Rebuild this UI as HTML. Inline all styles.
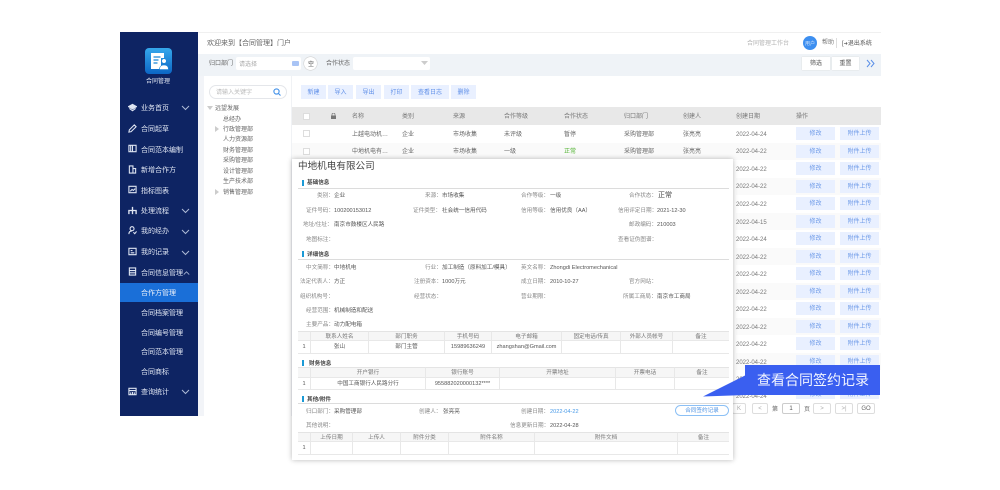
<!DOCTYPE html>
<html lang="zh">
<head>
<meta charset="utf-8">
<title>合同管理</title>
<style>
html,body{margin:0;padding:0;background:#fff}
#p{position:relative;width:1000px;height:490px;overflow:hidden;background:#fff;font-family:"Liberation Sans","Noto Sans CJK SC",sans-serif;color:#666;filter:blur(.3px)}
#p div,#p span,#p svg{position:absolute}
.t{white-space:nowrap;line-height:10px;height:8px;font-size:6px}
.m{white-space:nowrap;line-height:10px;height:8px;font-size:5.6px;color:#555}
.l{color:#888}
.s{white-space:nowrap;line-height:13px;height:10px;font-size:7px;color:#dfe5f2;left:141px}
.i{left:128px;width:9px;height:9px;fill:none;stroke:#dfe5f2;stroke-width:1.2;margin-top:1px}
.v{left:181px;width:9px;height:6px;fill:none;stroke:#aebad6;stroke-width:1;margin-top:1px}
.b{height:14px;line-height:16px;top:85px;background:#e9f0ff;color:#5f8fe8;font-size:6px;text-align:center}
.h{top:112px;color:#777}
.d{left:736px;color:#777}
.e{left:796px;width:39px;height:13px;line-height:15px;background:#e9f0ff;color:#6f9be8;font-size:6px;text-align:center}
.f{left:840px;width:39px;height:13px;line-height:15px;background:#e9f0ff;color:#6f9be8;font-size:6px;text-align:center}
.c{box-sizing:border-box;text-align:center;font-size:5.6px;white-space:nowrap;color:#555;border-right:1px solid #e8e8e8;border-bottom:1px solid #e8e8e8}
.hc{height:10px;line-height:10px;background:#f6f6f6;color:#777;border-top:1px solid #e4e4e4}
.bar{left:302px;width:2px;height:6px;background:#1b9ad6}
.sec{left:307px;font-weight:bold;color:#444;font-size:5.6px;white-space:nowrap;line-height:10px;height:8px}
.ln{left:298px;width:431px;height:1px;background:#dcdcdc}
.pg{top:403px;height:11px;box-sizing:border-box;border:1px solid #ddd;border-radius:2px;background:#fff;text-align:center;line-height:10px;font-size:6px;color:#aaa}
</style>
</head>
<body>
<div id="p">
<!-- main frame -->
<div style="left:198px;top:32px;width:683px;height:384px;background:#fff"></div>
<div style="left:198px;top:32px;width:683px;height:1px;background:#f0f0f0"></div>
<div style="left:198px;top:54px;width:683px;height:22px;background:#eff3f7"></div>
<div style="left:198px;top:76px;width:6px;height:340px;background:#f2f4f8"></div>
<div style="left:291px;top:76px;width:1px;height:340px;background:#f0f2f5"></div>

<!-- sidebar -->
<div style="left:120px;top:32px;width:78px;height:384px;background:#0e2463"></div>
<div style="left:145px;top:48px;width:27px;height:26px;border-radius:4px;background:linear-gradient(#35a8ec,#0c66c4)"></div>
<svg style="left:145px;top:48px" width="27" height="26" viewBox="0 0 27 26"><path d="M6 5h13v5h-3v11H6z" fill="#fff"/><path d="M8.500 9h7M8.500 12h5M8.500 15h4" stroke="#1b86d8" stroke-width="1.300"/><circle cx="19" cy="13" r="2.300" fill="#fff" stroke="#1b86d8" stroke-width=".6"/><path d="M14.500 21.500c0-3 2-4.500 4.500-4.500s4.500 1.500 4.500 4.500z" fill="#fff" stroke="#1b86d8" stroke-width=".6"/></svg>
<div class="t" style="left:146px;top:77px;color:#e6ebf5">合同管理</div>

<svg class="i" style="top:102px" viewBox="0 0 10 10"><path d="M.5 4L5 1.500 9.500 4 5 6.500z" fill="#dfe5f2"/><path d="M1.500 6L5 8.500 8.500 6"/></svg>
<div class="s" style="top:102px">业务首页</div>
<svg class="v" style="top:104px" viewBox="0 0 9 6"><path d="M1 1l3.500 3.500L8 1"/></svg>
<svg class="i" style="top:123px" viewBox="0 0 10 10"><path d="M1 9l.5-2.500L7 1l2 2-5.500 5.500z"/></svg>
<div class="s" style="top:123px">合同起草</div>
<svg class="i" style="top:143px" viewBox="0 0 10 10"><path d="M1 1.500h8v7H1zM5 1.500v7M3 1.500v7"/></svg>
<div class="s" style="top:143.500px">合同范本编制</div>
<svg class="i" style="top:164px" viewBox="0 0 10 10"><path d="M1.500 1h4v8h-4zM5.500 4h3v5h-3z"/></svg>
<div class="s" style="top:164px">新增合作方</div>
<svg class="i" style="top:184px" viewBox="0 0 10 10"><path d="M1 1.500h8v7H1zM2.500 7l2-2 1.500 1 2-2"/></svg>
<div class="s" style="top:184.500px">指标图表</div>
<svg class="i" style="top:205px" viewBox="0 0 10 10"><path d="M5 1v8M1 9V5h8v4" stroke-width="1.500"/></svg>
<div class="s" style="top:205px">处理流程</div>
<svg class="v" style="top:207px" viewBox="0 0 9 6"><path d="M1 1l3.500 3.500L8 1"/></svg>
<svg class="i" style="top:225px" viewBox="0 0 10 10"><circle cx="4.500" cy="3" r="2.200"/><path d="M1 9c0-2.500 1.500-3.500 3.500-3.500M6 7l1.500 1.500L9.500 6"/></svg>
<div class="s" style="top:225px">我的经办</div>
<svg class="v" style="top:228px" viewBox="0 0 9 6"><path d="M1 1l3.500 3.500L8 1"/></svg>
<svg class="i" style="top:246px" viewBox="0 0 10 10"><path d="M1 1.500h8v7H1zM3 6.500h4M3 4h2"/></svg>
<div class="s" style="top:246px">我的记录</div>
<svg class="v" style="top:249px" viewBox="0 0 9 6"><path d="M1 1l3.500 3.500L8 1"/></svg>
<svg class="i" style="top:266px" viewBox="0 0 10 10"><path d="M1.500 1h7v8h-7zM1.500 4h7M1.500 6.500h7"/></svg>
<div class="s" style="top:266.500px">合同信息管理</div>
<svg class="v" style="top:269px;left:183px;width:7px" viewBox="0 0 9 6"><path d="M1 5l3.500-3.500L8 5"/></svg>
<div style="left:120px;top:283px;width:78px;height:19px;background:#1a6fd8"></div>
<div class="s" style="top:287px;color:#eef3fb">合作方管理</div>
<div class="s" style="top:307px">合同档案管理</div>
<div class="s" style="top:326.500px">合同编号管理</div>
<div class="s" style="top:346px">合同范本管理</div>
<div class="s" style="top:366px">合同商标</div>
<svg class="i" style="top:386px" viewBox="0 0 10 10"><path d="M1 1.500h8v7H1zM1 4h8M3 8V6M5 8V5.500M7 8V6"/></svg>
<div class="s" style="top:386px">查询统计</div>
<svg class="v" style="top:388px" viewBox="0 0 9 6"><path d="M1 1l3.500 3.500L8 1"/></svg>

<!-- top bar -->
<div class="t" style="left:207px;top:39px;font-size:7px;color:#666">欢迎来到【合同管理】门户</div>
<div class="t" style="left:747px;top:39px;color:#b4b4b4">合同管理工作台</div>
<div style="left:803px;top:36px;width:14px;height:14px;border-radius:50%;background:#3d8ff0"></div>
<div class="t" style="left:805px;top:39px;font-size:5px;color:#cfe2fb">用户</div>
<div class="t" style="left:822px;top:38px;color:#777">帮助</div>
<div style="left:836px;top:38px;width:1px;height:10px;background:#ddd"></div>
<div class="t" style="left:842px;top:39px;color:#555">[<span style="position:static;font-size:5px">➜</span>退出系统</div>

<!-- filter bar -->
<div class="t" style="left:209px;top:59px;color:#666">归口部门</div>
<div style="left:236px;top:57px;width:65px;height:13px;background:#fff;border-radius:2px"></div>
<div class="t" style="left:239px;top:60px;color:#aaa">请选择</div>
<div style="left:292px;top:61px;width:7px;height:5px;background:#a9c4f5;border-radius:1px"></div>
<div style="left:304px;top:57px;width:13px;height:13px;border-radius:50%;background:#fff;box-shadow:0 0 0 .5px #ccc"></div>
<div class="t" style="left:308px;top:60px;color:#444">空</div>
<div class="t" style="left:326px;top:59px;color:#666">合作状态</div>
<div style="left:353px;top:57px;width:77px;height:13px;background:#fff;border-radius:2px"></div>
<svg style="left:421px;top:61px" width="7" height="5" viewBox="0 0 7 5"><path d="M0 0h7L3.500 4z" fill="#ccc"/></svg>
<div style="left:802px;top:57px;width:28px;height:13px;background:#fff;box-shadow:0 0 1px #ccc;line-height:15px;font-size:6px;color:#555;text-align:center">筛选</div>
<div style="left:832px;top:57px;width:27px;height:13px;background:#fff;box-shadow:0 0 1px #ccc;line-height:15px;font-size:6px;color:#555;text-align:center">重置</div>
<svg style="left:866px;top:59px;fill:none;stroke:#5a8fe8;stroke-width:1" width="9" height="9" viewBox="0 0 9 9"><path d="M1 1l3 3.500L1 8M5 1l3 3.500L5 8"/></svg>

<!-- tree -->
<div style="left:209px;top:85px;width:76px;height:12px;border:1px solid #e4e6ea;border-radius:7px"></div>
<div class="t" style="left:216px;top:88px;color:#bbb">请输入关键字</div>
<svg style="left:273px;top:88px;fill:none;stroke:#3f8fe8;stroke-width:1.100" width="8" height="8" viewBox="0 0 8 8"><circle cx="3.500" cy="3.500" r="2.600"/><path d="M5.500 5.500L7.500 7.500"/></svg>
<svg style="left:207px;top:106px" width="6" height="5" viewBox="0 0 6 5"><path d="M0 0h6L3 4z" fill="#ccc"/></svg>
<div class="t" style="left:215px;top:104px">远望发展</div>
<div class="t" style="left:223px;top:114.500px">总经办</div>
<svg style="left:215px;top:126px" width="4" height="6" viewBox="0 0 4 6"><path d="M0 0v6l4-3z" fill="#ccc"/></svg>
<div class="t" style="left:223px;top:125px">行政管理部</div>
<div class="t" style="left:223px;top:135px">人力资源部</div>
<div class="t" style="left:223px;top:146px">财务管理部</div>
<div class="t" style="left:223px;top:156px">采购管理部</div>
<div class="t" style="left:223px;top:166.500px">设计管理部</div>
<div class="t" style="left:223px;top:177px">生产技术部</div>
<svg style="left:215px;top:189px" width="4" height="6" viewBox="0 0 4 6"><path d="M0 0v6l4-3z" fill="#ccc"/></svg>
<div class="t" style="left:223px;top:187.500px">销售管理部</div>

<!-- toolbar -->
<div class="b" style="left:301px;width:25px">新建</div>
<div class="b" style="left:328px;width:25px">导入</div>
<div class="b" style="left:356px;width:25px">导出</div>
<div class="b" style="left:384px;width:25px">打印</div>
<div class="b" style="left:411px;width:38px">查看日志</div>
<div class="b" style="left:451px;width:25px">删除</div>

<!-- table -->
<div style="left:292px;top:107px;width:589px;height:18px;background:#e8e8e8"></div>
<div style="left:292px;top:143px;width:589px;height:17px;background:#fafafa"></div>
<div style="left:736px;top:178px;width:145px;height:17px;background:#fafafa"></div>
<div style="left:736px;top:213px;width:145px;height:17px;background:#fafafa"></div>
<div style="left:736px;top:248px;width:145px;height:17px;background:#fafafa"></div>
<div style="left:736px;top:283px;width:145px;height:17px;background:#fafafa"></div>
<div style="left:736px;top:318px;width:145px;height:17px;background:#fafafa"></div>
<div style="left:736px;top:353px;width:145px;height:17px;background:#fafafa"></div>
<div style="left:303px;top:113px;width:5px;height:5px;background:#fff;border:1px solid #ddd"></div>
<svg style="left:331px;top:113px" width="5" height="6" viewBox="0 0 5 6"><path d="M0 2.500h5V6H0z" fill="#777"/><path d="M1 2.500V1.500a1.500 1.500 0 013 0v1" fill="none" stroke="#777" stroke-width=".7"/></svg>
<div class="t h" style="left:352px">名称</div>
<div class="t h" style="left:402px">类别</div>
<div class="t h" style="left:453px">来源</div>
<div class="t h" style="left:504px">合作等级</div>
<div class="t h" style="left:564px">合作状态</div>
<div class="t h" style="left:624px">归口部门</div>
<div class="t h" style="left:683px">创建人</div>
<div class="t h" style="left:736px">创建日期</div>
<div class="t h" style="left:796px">操作</div>

<div style="left:303px;top:130px;width:5px;height:5px;background:#fff;border:1px solid #ddd"></div>
<div class="t" style="left:352px;top:130px">上越电动机…</div>
<div class="t" style="left:402px;top:130px">企业</div>
<div class="t" style="left:453px;top:130px">市场收集</div>
<div class="t" style="left:504px;top:130px">未评级</div>
<div class="t" style="left:564px;top:130px">暂停</div>
<div class="t" style="left:624px;top:130px">采购管理部</div>
<div class="t" style="left:683px;top:130px">张亮亮</div>

<div style="left:303px;top:148px;width:5px;height:5px;background:#fff;border:1px solid #ddd"></div>
<div class="t" style="left:352px;top:147px">中地机电有…</div>
<div class="t" style="left:402px;top:147px">企业</div>
<div class="t" style="left:453px;top:147px">市场收集</div>
<div class="t" style="left:504px;top:147px">一级</div>
<div class="t" style="left:564px;top:147px;color:#52b332">正常</div>
<div class="t" style="left:624px;top:147px">采购管理部</div>
<div class="t" style="left:683px;top:147px">张亮亮</div>

<div class="t d" style="top:130px">2022-04-24</div><div class="e" style="top:127px">修改</div><div class="f" style="top:127px">附件上传</div>
<div class="t d" style="top:147px">2022-04-22</div><div class="e" style="top:145px">修改</div><div class="f" style="top:145px">附件上传</div>
<div class="t d" style="top:165px">2022-04-22</div><div class="e" style="top:162px">修改</div><div class="f" style="top:162px">附件上传</div>
<div class="t d" style="top:182px">2022-04-22</div><div class="e" style="top:180px">修改</div><div class="f" style="top:180px">附件上传</div>
<div class="t d" style="top:200px">2022-04-22</div><div class="e" style="top:197px">修改</div><div class="f" style="top:197px">附件上传</div>
<div class="t d" style="top:218px">2022-04-15</div><div class="e" style="top:215px">修改</div><div class="f" style="top:215px">附件上传</div>
<div class="t d" style="top:235px">2022-04-24</div><div class="e" style="top:232px">修改</div><div class="f" style="top:232px">附件上传</div>
<div class="t d" style="top:253px">2022-04-22</div><div class="e" style="top:250px">修改</div><div class="f" style="top:250px">附件上传</div>
<div class="t d" style="top:270px">2022-04-22</div><div class="e" style="top:267px">修改</div><div class="f" style="top:267px">附件上传</div>
<div class="t d" style="top:288px">2022-04-22</div><div class="e" style="top:285px">修改</div><div class="f" style="top:285px">附件上传</div>
<div class="t d" style="top:305px">2022-04-22</div><div class="e" style="top:302px">修改</div><div class="f" style="top:302px">附件上传</div>
<div class="t d" style="top:323px">2022-04-22</div><div class="e" style="top:320px">修改</div><div class="f" style="top:320px">附件上传</div>
<div class="t d" style="top:340px">2022-04-22</div><div class="e" style="top:337px">修改</div><div class="f" style="top:337px">附件上传</div>
<div class="t d" style="top:358px">2022-04-22</div><div class="e" style="top:355px">修改</div><div class="f" style="top:355px">附件上传</div>
<div class="t d" style="top:375px">2022-04-22</div><div class="e" style="top:372px">修改</div><div class="f" style="top:372px">附件上传</div>
<div class="t d" style="top:392px">2022-04-24</div><div class="e" style="top:390px;height:9px;line-height:11px">修改</div><div class="f" style="top:390px;height:9px;line-height:11px">附件上传</div>

<!-- pagination -->
<div class="pg" style="left:732px;width:14px">K</div>
<div class="pg" style="left:752px;width:16px">&lt;</div>
<div class="t" style="left:772px;top:405px">第</div>
<div class="pg" style="left:782px;width:18px;color:#555;border-color:#ccc">1</div>
<div class="t" style="left:804px;top:405px">页</div>
<div class="pg" style="left:813px;width:18px">&gt;</div>
<div class="pg" style="left:835px;width:18px">&gt;|</div>
<div class="pg" style="left:857px;width:18px;color:#666">GO</div>

<!-- modal -->
<div style="left:292px;top:159px;width:441px;height:301px;background:#fff;box-shadow:0 0 5px rgba(0,0,0,.28)"></div>
<div class="t" style="left:298px;top:160px;height:12px;line-height:14px;font-size:9.600px;color:#444">中地机电有限公司</div>

<div class="bar" style="top:180px"></div><div class="sec" style="top:178px">基础信息</div><div class="ln" style="top:187.500px"></div>
<div class="m l" style="left:317px;top:191px">类别：</div><div class="m" style="left:334px;top:191px">企业</div>
<div class="m l" style="left:425px;top:191px">来源：</div><div class="m" style="left:442px;top:191px">市场收集</div>
<div class="m l" style="left:521px;top:191px">合作等级：</div><div class="m" style="left:550px;top:191px">一级</div>
<div class="m l" style="left:629px;top:191px">合作状态：</div><div class="m" style="left:658px;top:190.500px;font-size:7px;color:#444">正常</div>
<div class="m l" style="left:306px;top:205.500px">证件号码：</div><div class="m" style="left:334px;top:205.500px">100200153012</div>
<div class="m l" style="left:413px;top:205.500px">证件类型：</div><div class="m" style="left:442px;top:205.500px">社会统一信用代码</div>
<div class="m l" style="left:521px;top:205.500px">信用等级：</div><div class="m" style="left:550px;top:205.500px">信用优良（AA）</div>
<div class="m l" style="left:618px;top:205.500px">信用评定日期：</div><div class="m" style="left:657px;top:205.500px">2021-12-30</div>
<div class="m l" style="left:303px;top:220px">地址/住址：</div><div class="m" style="left:334px;top:220px">南京市鼓楼区人民路</div>
<div class="m l" style="left:629px;top:220px">邮政编码：</div><div class="m" style="left:657px;top:220px">210003</div>
<div class="m l" style="left:306px;top:234.500px">地图标注：</div>
<div class="m l" style="left:618px;top:234.500px">查看证伪图谱：</div>

<div class="bar" style="top:251px"></div><div class="sec" style="top:250px">详细信息</div><div class="ln" style="top:258.500px"></div>
<div class="m l" style="left:306px;top:263px">中文简称：</div><div class="m" style="left:334px;top:263px">中地机电</div>
<div class="m l" style="left:425px;top:263px">行业：</div><div class="m" style="left:442px;top:263px">加工制造（原料加工/模具）</div>
<div class="m l" style="left:521px;top:263px">英文名称：</div><div class="m" style="left:550px;top:263px">Zhongdi Electromechanical</div>
<div class="m l" style="left:300px;top:277px">法定代表人：</div><div class="m" style="left:334px;top:277px">方正</div>
<div class="m l" style="left:414px;top:277px">注册资本：</div><div class="m" style="left:442px;top:277px">1000万元</div>
<div class="m l" style="left:521px;top:277px">成立日期：</div><div class="m" style="left:550px;top:277px">2010-10-27</div>
<div class="m l" style="left:629px;top:277px">官方网站：</div>
<div class="m l" style="left:300px;top:291.500px">组织机构号：</div>
<div class="m l" style="left:414px;top:291.500px">经营状态：</div>
<div class="m l" style="left:521px;top:291.500px">营业期限：</div>
<div class="m l" style="left:623px;top:291.500px">所属工商局：</div><div class="m" style="left:657px;top:291.500px">南京市工商局</div>
<div class="m l" style="left:306px;top:305.500px">经营范围：</div><div class="m" style="left:334px;top:305.500px">机械制造和配送</div>
<div class="m l" style="left:306px;top:320px">主要产品：</div><div class="m" style="left:334px;top:320px">动力配电箱</div>

<div class="c hc" style="left:298px;top:331px;width:13px"></div>
<div class="c hc" style="left:311px;top:331px;width:58px">联系人姓名</div>
<div class="c hc" style="left:369px;top:331px;width:76px">部门职务</div>
<div class="c hc" style="left:445px;top:331px;width:47px">手机号码</div>
<div class="c hc" style="left:492px;top:331px;width:70px">电子邮箱</div>
<div class="c hc" style="left:562px;top:331px;width:59px">固定电话/传真</div>
<div class="c hc" style="left:621px;top:331px;width:52px">外部人员帐号</div>
<div class="c hc" style="left:673px;top:331px;width:56px;border-right:0">备注</div>
<div class="c" style="left:298px;top:341px;width:13px;height:13px;line-height:13px">1</div>
<div class="c" style="left:311px;top:341px;width:58px;height:13px;line-height:13px">张山</div>
<div class="c" style="left:369px;top:341px;width:76px;height:13px;line-height:13px">部门主管</div>
<div class="c" style="left:445px;top:341px;width:47px;height:13px;line-height:13px">15989636249</div>
<div class="c" style="left:492px;top:341px;width:70px;height:13px;line-height:13px">zhangshan@Gmail.com</div>
<div class="c" style="left:562px;top:341px;width:59px;height:13px"></div>
<div class="c" style="left:621px;top:341px;width:52px;height:13px"></div>
<div class="c" style="left:673px;top:341px;width:56px;height:13px;border-right:0"></div>

<div class="bar" style="top:360px"></div><div class="sec" style="left:309px;top:359px">财务信息</div>
<div class="c hc" style="left:298px;top:367px;width:13px;height:11px"></div>
<div class="c hc" style="left:311px;top:367px;width:115px;height:11px">开户银行</div>
<div class="c hc" style="left:426px;top:367px;width:74px;height:11px">银行账号</div>
<div class="c hc" style="left:500px;top:367px;width:116px;height:11px">开票地址</div>
<div class="c hc" style="left:616px;top:367px;width:59px;height:11px">开票电话</div>
<div class="c hc" style="left:675px;top:367px;width:54px;height:11px;border-right:0">备注</div>
<div class="c" style="left:298px;top:378px;width:13px;height:12px;line-height:12px">1</div>
<div class="c" style="left:311px;top:378px;width:115px;height:12px;line-height:12px">中国工商银行人民路分行</div>
<div class="c" style="left:426px;top:378px;width:74px;height:12px;line-height:12px">955882020000132****</div>
<div class="c" style="left:500px;top:378px;width:116px;height:12px"></div>
<div class="c" style="left:616px;top:378px;width:59px;height:12px"></div>
<div class="c" style="left:675px;top:378px;width:54px;height:12px;border-right:0"></div>

<div class="bar" style="top:396px"></div><div class="sec" style="top:395px">其他/附件</div><div class="ln" style="top:402.500px"></div>
<div class="m l" style="left:306px;top:406.500px">归口部门：</div><div class="m" style="left:334px;top:406.500px">采购管理部</div>
<div class="m l" style="left:419px;top:406.500px">创建人：</div><div class="m" style="left:443px;top:406.500px">张亮亮</div>
<div class="m l" style="left:521px;top:406.500px">创建日期：</div><div class="m" style="left:550px;top:406.500px;color:#4a9be8">2022-04-22</div>
<div style="left:675px;top:405px;width:52px;height:9px;border:1px solid #8cc0f5;border-radius:6px;line-height:11px;font-size:5.600px;color:#4a90e2;text-align:center">合同签约记录</div>
<div class="m l" style="left:306px;top:420.500px">其他说明：</div>
<div class="m l" style="left:510px;top:420.500px">信息更新日期：</div><div class="m" style="left:550px;top:420.500px">2022-04-28</div>

<div class="c hc" style="left:298px;top:432px;width:13px"></div>
<div class="c hc" style="left:311px;top:432px;width:42px">上传日期</div>
<div class="c hc" style="left:353px;top:432px;width:48px">上传人</div>
<div class="c hc" style="left:401px;top:432px;width:48px">附件分类</div>
<div class="c hc" style="left:449px;top:432px;width:86px">附件名称</div>
<div class="c hc" style="left:535px;top:432px;width:143px">附件文档</div>
<div class="c hc" style="left:678px;top:432px;width:51px;border-right:0">备注</div>
<div class="c" style="left:298px;top:442px;width:13px;height:13px;line-height:13px">1</div>
<div class="c" style="left:311px;top:442px;width:42px;height:13px"></div>
<div class="c" style="left:353px;top:442px;width:48px;height:13px"></div>
<div class="c" style="left:401px;top:442px;width:48px;height:13px"></div>
<div class="c" style="left:449px;top:442px;width:86px;height:13px"></div>
<div class="c" style="left:535px;top:442px;width:143px;height:13px"></div>
<div class="c" style="left:678px;top:442px;width:51px;height:13px;border-right:0"></div>

<!-- callout -->
<svg style="left:702px;top:374px" width="44" height="24" viewBox="0 0 44 24"><path d="M1 22.500L44 1v20z" fill="#3a5ff0"/></svg>
<div style="left:745px;top:365px;width:135px;height:30px;background:#3a5ff0"></div>
<div style="left:757px;top:371px;height:18px;line-height:18px;font-size:14px;color:#f2f5ff;white-space:nowrap">查看合同签约记录</div>
</div>
</body>
</html>
